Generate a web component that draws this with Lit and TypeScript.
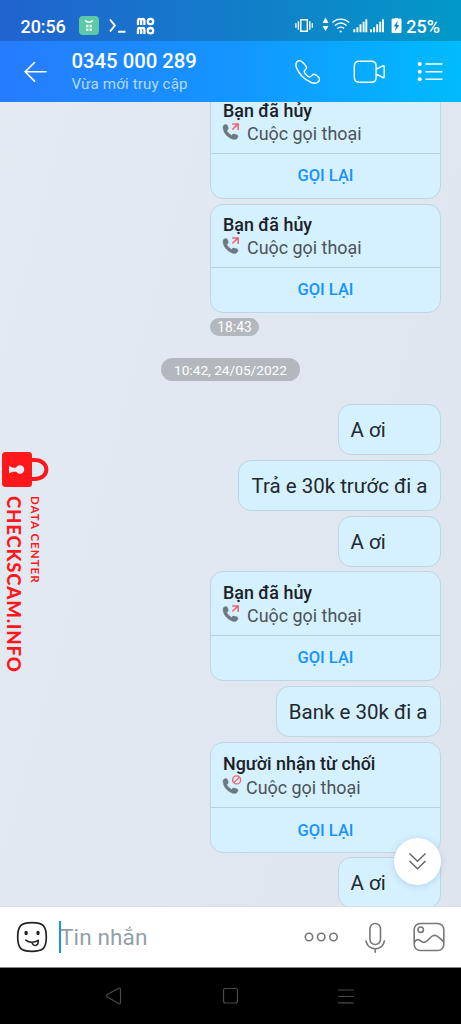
import { LitElement, html, svg, css } from 'lit';
import { customElement, property } from 'lit/decorators.js';

const handset = 'M1 2.800C1 1 2.400 0 4 0 5.200 0 5.700 1 6.100 3c.3 1.500 0 2.100-1.300 3.100C5.700 8 7.500 9.800 9.600 10.900c1-1.200 1.600-1.500 2.900-1.200 2.500.5 3.500.9 3.500 2.100-.1 1.700-1.400 3.200-3.300 3.200C7 14.900 1 8.700 1 2.800Z';

@customElement('call-card')
class CallCard extends LitElement {
  @property() heading = '';
  @property({ type: Boolean }) declined = false;
  static styles = css`
    :host { display: block; width: 231px; box-sizing: border-box; border: 1px solid #bdd6e3; border-radius: 13px; background: #d5f0ff; font-family: Roboto, sans-serif; }
    .top { height: 63.6px; box-sizing: border-box; padding: 8.2px 0 0 12px; border-bottom: 1px solid #b5d0df; }
    .declined { height: 65.5px; padding-top: 9px; }
    .title { font-size: 17.9px; line-height: 23px; font-weight: 500; color: #1b2125; white-space: nowrap; }
    .row { display: flex; align-items: flex-start; color: #4c5357; font-size: 17.9px; line-height: 23px; }
    .declined .row { padding-top: 1px; }
    .row svg { flex: none; width: 24px; height: 21px; overflow: visible; }
    .declined svg { width: 23px; }
    .again { height: 44px; line-height: 44.4px; text-align: center; color: #1593ff; font-size: 16.5px; font-weight: 500; }
    .declined + .again { height: 43.5px; line-height: 45px; }
  `;
  render() {
    return html`<div class="top ${this.declined ? 'declined' : ''}">
        <div class="title">${this.heading}</div>
        <div class="row">
          <svg viewBox="0 0 ${this.declined ? 23 : 24} 21">
            <path d=${handset} transform="translate(-1 2.500)" fill="#6d7880" stroke="#6d7880" stroke-width=".4" />
            ${this.declined
              ? svg`<g fill="none" stroke="#f26068" stroke-width="1.300"><circle cx="13.600" cy="3.900" r="4"/><path d="M10.900 6.600 16.300 1.200"/></g>`
              : svg`<path d="M9.400 7.500 14.800 2.100 M9.200 1.900h6v6" fill="none" stroke="#f26068" stroke-width="1.500"/>`}
          </svg><span>Cuộc gọi thoại</span>
        </div>
      </div>
      <div class="again">GỌI LẠI</div>`;
  }
}

@customElement('text-bubble')
class TextBubble extends LitElement {
  @property() text = '';
  static styles = css`
    :host { display: block; min-width: 103.5px; height: 51px; box-sizing: border-box; border: 1px solid #bdd6e3; border-radius: 13px; background: #d5f0ff; padding: 0 12.5px 0 12px; font: 20.5px/50px Roboto, sans-serif; color: #22282c; white-space: nowrap; }
  `;
  render() { return html`${this.text}`; }
}

type Item = { kind: 'call' | 'text'; text: string; declined?: boolean };
const later: Item[] = [
  { kind: 'text', text: 'A ơi' },
  { kind: 'text', text: 'Trả e 30k trước đi a' },
  { kind: 'text', text: 'A ơi' },
  { kind: 'call', text: 'Bạn đã hủy' },
  { kind: 'text', text: 'Bank e 30k đi a' },
  { kind: 'call', text: 'Người nhận từ chối', declined: true },
  { kind: 'text', text: 'A ơi' },
];

@customElement('app-root')
class AppRoot extends LitElement {
  static styles = css`
    :host { display: flex; flex-direction: column; position: relative; width: 461px; height: 1024px; overflow: hidden; font-family: Roboto, sans-serif; }
    svg { display: block; flex: none; }
    .status { height: 41px; flex: none; box-sizing: border-box; padding: 12px 21px 0 20.5px; display: flex; color: #fff; background: linear-gradient(90deg, #2163cf, #117fc9 55%, #0299c8); font-size: 18px; line-height: 29px; font-weight: 500; }
    .clock { width: 58.5px; letter-spacing: -.1px; }
    .grow { flex: 1; }
    .header { height: 61px; flex: none; display: flex; color: #fff; background: linear-gradient(90deg, #277bff, #1495ff 50%, #00bbfd); }
    .who { width: 223px; padding-top: 8px; white-space: nowrap; }
    .name { font-size: 20.3px; line-height: 25px; font-weight: 500; }
    .seen { font-size: 15.2px; line-height: 20px; color: #b3dafe; letter-spacing: .1px; }
    .chat { height: 804px; flex: none; overflow: hidden; box-sizing: border-box; padding-right: 20px; display: flex; flex-direction: column; align-items: flex-end; gap: 4.75px; background: linear-gradient(105deg, #e2eaf2, #dfe5ef); }
    .chat > * { flex: none; }
    .first { margin-top: -12.5px; }
    .time { align-self: flex-start; margin-left: 210px; height: 18px; width: 49px; border-radius: 9px; background: #b2b8bd; color: #fff; font-size: 13.8px; line-height: 19px; text-align: center; }
    .date { align-self: flex-start; margin: 17.5px 0 18px 161px; width: 139px; height: 23px; border-radius: 12px; background: #b2b8bd; color: #fff; font-size: 13.7px; line-height: 24px; text-align: center; white-space: nowrap; }
    .input { height: 62px; flex: none; box-sizing: border-box; border-top: 1px solid #dadde1; border-bottom: 1px solid #888; display: flex; background: #fff; }
    .caret { width: 2px; height: 32px; margin: 14px 0 0 11px; background: #1593ff; }
    .hint { flex: 1; margin-left: -1px; font-size: 22.6px; line-height: 62px; color: #929fa8; letter-spacing: .1px; }
    .nav { height: 57px; flex: none; background: #000; }
    .down { position: absolute; left: 394px; top: 838px; width: 47px; height: 47px; border-radius: 50%; background: #fff; box-shadow: 0 1px 6px #50789640; }
    .mark { position: absolute; left: 0; top: 451px; color: #fe171b; font-family: Lato, sans-serif; }
    .words { display: flex; flex-direction: row-reverse; justify-content: flex-end; margin-top: 8px; }
    .words div { writing-mode: vertical-rl; white-space: nowrap; }
    .site { width: 20px; line-height: 20px; margin-left: 4px; font-size: 18.6px; font-weight: 900; letter-spacing: .8px; }
    .dc { width: 14px; line-height: 14px; margin-left: 4px; font-size: 11.5px; font-weight: 700; letter-spacing: 1.05px; }
  `;

  private item(i: Item) {
    return i.kind === 'call'
      ? html`<call-card heading=${i.text} ?declined=${!!i.declined}></call-card>`
      : html`<text-bubble text=${i.text}></text-bubble>`;
  }

  render() {
    return html`
      <div class="status">
        <span class="clock">20:56</span>
        <svg width="76" height="26" viewBox="79 12 76 26" fill="none" stroke="#fff">
          <rect x="79" y="16" width="20" height="19" rx="4" fill="#5fc8a6" stroke="none"/>
          <path d="M85 20.500q4 3.400 8 0" stroke-width="1.500"/>
          <path d="M86 26h2.500M89.500 26h2.500M86 29.700h2.500M89.500 29.700h2.500" stroke-width="2.500" opacity=".8"/>
          <path d="M110 19.500l4.800 6-4.800 6M118 31.700h7.500" stroke-width="2"/>
          <g stroke-width="2.300"><path d="M138 25v-4q0-2.200 1.600-2.200t1.600 2.200V25M141.200 21q0-2.200 1.600-2.200t1.600 2.200V25M138 34v-4q0-2.200 1.600-2.200t1.600 2.200V34M141.200 30q0-2.200 1.600-2.200t1.600 2.200V34"/><circle cx="150.500" cy="21.500" r="2.700"/><circle cx="150.500" cy="30.700" r="2.700"/></g>
        </svg>
        <div class="grow"></div>
        <svg width="112" height="28" viewBox="294 12 112 28" fill="none" stroke="#fff">
          <path d="M300.800 19.800h6.500v11.400h-6.500zM298.400 21.200v8.600M309.800 21.200v8.600M295.900 23.300v4.400M312.300 23.300v4.400" stroke-width="1.400"/>
          <path d="M325.500 17.600l3 5.400h-6zM325.500 31l3-5h-6z" fill="#fff" stroke="none"/>
          <path d="M332.300 22.400c5-4.400 11.800-4.400 16.800 0M334.900 25.500c3.800-3.200 8-3.200 11.600 0M337.400 28.400c2.400-1.800 4.400-1.800 6.600 0" stroke-width="1.300"/><circle cx="340.700" cy="31.500" r="1.100" fill="#fff" stroke="none"/>
          <path d="M354.300 32.300v-3M357.400 32.300v-5M360.500 32.300v-8M363.600 32.300v-10.500M366.300 32.300v-13M371 32.300v-3M374.100 32.300v-5M377.200 32.300v-8M380.200 32.300v-10.500M383 32.300v-13" stroke-width="1.900"/>
          <path d="M393 18.500h1.700q.4 0 .4.400v-.9h2.800v.5h2.600q1 0 1 1v12.600q0 1-1 1h-7.900q-1 0-1-1V19.500q0-1 1.400-1z" fill="#fff" stroke="none"/>
          <path d="M397.800 20.800l-4.200 5.600h2.300l-.8 4.600 4.300-6.100h-2.400z" fill="#0b87c7" stroke="none"/>
        </svg>
        <span>25%</span>
      </div>
      <div class="header">
        <svg width="71.5" height="61" viewBox="0 41 71.5 61" fill="none" stroke="#fff" stroke-width="1.600" stroke-linecap="round"><path d="M46 71.800H25.500M34.500 62.500l-9.300 9.300 9.300 9.300"/></svg>
        <div class="who"><div class="name">0345 000 289</div><div class="seen">Vừa mới truy cập</div></div>
        <svg width="166" height="61" viewBox="295 41 166 61" fill="none" stroke="#fff" stroke-width="1.400" stroke-linejoin="round">
          <path d="M299.600 60.600c-3.800.2-4.300 4.200-3 7.400 2.900 6.800 7.700 11.500 14.600 14.500 4.700 1.900 8.300-.4 8.300-3.600 0-1.500-4-4.500-5.500-4.600-1.700-.1-2.700 2.400-4.300 2.700-1.600.2-5.700-4-5.500-5.600.2-1.500 2.500-2.200 2.300-3.900-.2-1.600-4.500-7-6.900-6.900Z"/>
          <path d="M359.300 61.300h12q4.800 0 4.800 4.800v11.300q0 4.800-4.800 4.800h-12q-5-.1-5-5V66.200q0-4.900 5-4.900ZM376.300 69.200l6.600-3.400q1.300-.5 1.300.9v10q0 1.500-1.300.8l-6.600-3.300"/>
          <path d="M425.500 64H442.500M425.500 71.700H442.500M425.500 79.300H442.500" stroke-width="1.500"/>
          <g fill="#fff" stroke="none"><circle cx="419.700" cy="64" r="2"/><circle cx="419.700" cy="71.700" r="2"/><circle cx="419.700" cy="79.300" r="2"/></g>
        </svg>
      </div>
      <div class="chat">
        <call-card class="first" heading="Bạn đã hủy"></call-card>
        <call-card heading="Bạn đã hủy"></call-card>
        <div class="time">18:43</div>
        <div class="date">10:42, 24/05/2022</div>
        ${later.map((i) => this.item(i))}
      </div>
      <div class="input">
        <svg width="48" height="60" viewBox="0 907 48 60" fill="none" stroke="#202224" stroke-width="1.700" stroke-linecap="round">
          <path d="M32 922.700c11 0 14.300 3 14.300 14.300S43 951.300 32 951.300 17.700 948 17.700 937 21 922.700 32 922.700Z"/>
          <ellipse cx="26.100" cy="933" rx="1.700" ry="2.300" fill="#202224" stroke="none"/><ellipse cx="38" cy="933" rx="1.700" ry="2.300" fill="#202224" stroke="none"/>
          <path d="M25.800 940.200c3.400 2.700 8.700 2.700 12.300.2M32 942.200c.6 4.600 6.700 4.600 6.200-1.800" stroke-width="1.600"/>
        </svg>
        <div class="caret"></div>
        <div class="hint">Tin nhắn</div>
        <svg width="161" height="60" viewBox="300 907 161 60" fill="none" stroke="#777" stroke-width="1.600" stroke-linecap="round">
          <circle cx="309" cy="937" r="3.700"/><circle cx="321.200" cy="937" r="3.700"/><circle cx="333.500" cy="937" r="3.700"/>
          <rect x="369.900" y="923.500" width="10.600" height="21" rx="5.300"/><path d="M366 941c2.200 10.500 16.300 10.500 18.400 0M375.200 949v3.200"/>
          <rect x="414.200" y="923.500" width="29.600" height="27" rx="6"/><circle cx="420.700" cy="929.700" r="2.700"/>
          <path d="M414.600 942c2-3.500 4.500-2.500 6.500-.8 2.200 1.800 4.600 1.200 6.700-1 3-3 5.200-6.200 9-4.300 2.700 1.200 4.300 3.700 6.600 5.800"/>
        </svg>
      </div>
      <div class="nav">
        <svg width="461" height="56" viewBox="0 968 461 56" fill="none" stroke="#4a4a4a" stroke-width="1.200" stroke-linejoin="round">
          <path d="M118.500 988.300l-11.500 6.500q-1.200 1 0 2l11.500 6.700q2 .7 2-1v-13q0-1.800-2-1.200Z"/>
          <rect x="223.500" y="988.500" width="14" height="14.500" rx="2"/>
          <path d="M338 990h15.500M338 996.500h15.500M338 1002.800h15.500"/>
        </svg>
      </div>
      <div class="down"><svg width="47" height="47" fill="none" stroke="#666" stroke-width="1.500"><path d="M15.500 15.500l8 7.800 8-7.800M15.500 23l8 7.800 8-7.800"/></svg></div>
      <div class="mark">
        <svg width="50" height="37" viewBox="0 451 50 37" fill="none">
          <path d="M31 460h3.500c15.800 0 15.800 19 0 19H31" stroke="#fe171b" stroke-width="4"/>
          <rect x="2" y="452" width="30" height="35" rx="3.500" fill="#fe171b"/>
          <circle cx="20" cy="469.500" r="4.200" fill="#e6edf5"/><path d="M9 466l4 1.700h6v4h-6l-4 1.500z" fill="#e6edf5"/>
        </svg>
        <div class="words"><div class="dc">DATA CENTER</div><div class="site">CHECKSCAM.INFO</div></div>
      </div>
    `;
  }
}
